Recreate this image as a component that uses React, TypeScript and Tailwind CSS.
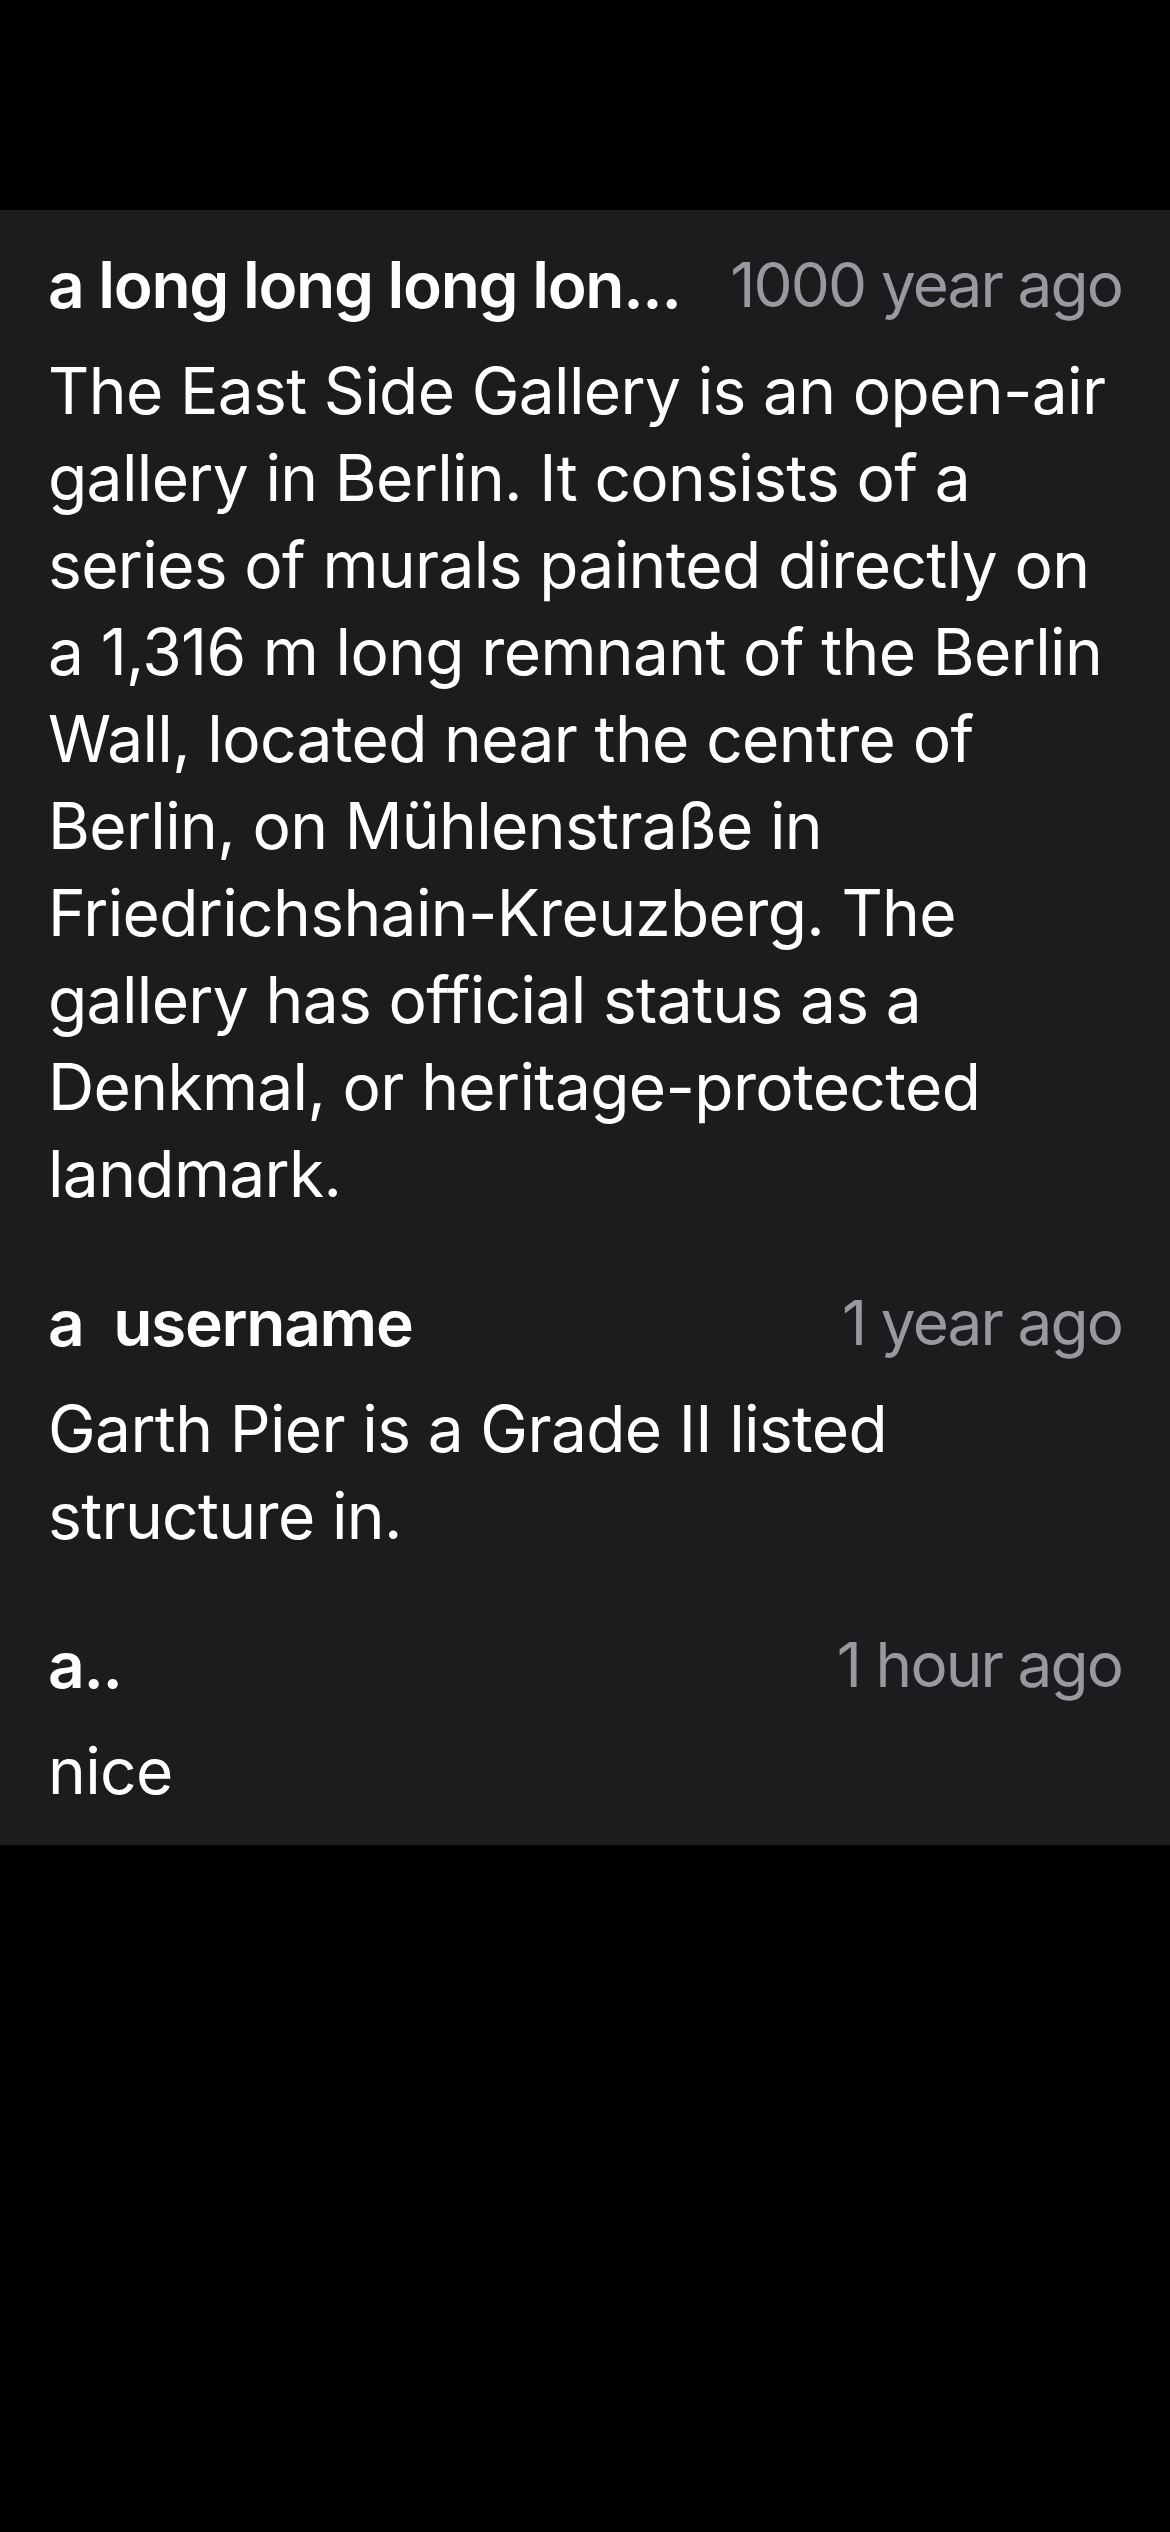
import React from 'react';

type Comment = {
  name: string;
  time: string;
  body: string;
};

const COMMENTS: Comment[] = [
  {
    name: 'a long long long lon...',
    time: '1000 year ago',
    body:
      'The East Side Gallery is an open-air gallery in Berlin. It consists of a series of murals painted directly on a 1,316 m long remnant of the Berlin Wall, located near the centre of Berlin, on Mühlenstraße in Friedrichshain-Kreuzberg. The gallery has official status as a Denkmal, or heritage-protected landmark.',
  },
  { name: 'a  username', time: '1 year ago', body: 'Garth Pier is a Grade II listed structure in.' },
  { name: 'a..', time: '1 hour ago', body: 'nice' },
];

const CommentRow: React.FC<{ comment: Comment }> = ({ comment }) => (
  <div className="px-12 py-[31px]">
    <div className="flex items-center justify-between gap-[32px] mb-[19px] leading-[87px]">
      <span className="min-w-0 truncate whitespace-pre font-semibold tracking-[-0.02em] text-white">
        {comment.name}
      </span>
      <span className="shrink-0 whitespace-nowrap text-[62px] tracking-[-0.03em] text-[#98989e]">
        {comment.time}
      </span>
    </div>
    <p className="text-white leading-[87px] tracking-[-0.01em]">{comment.body}</p>
  </div>
);

export default function App() {
  return (
    <div
      className="min-h-[2532px] w-full bg-black pt-[210px] text-[64px] antialiased"
      style={{ fontFamily: 'Inter, "Liberation Sans", sans-serif' }}
    >
      <div className="bg-[#1c1c1e]">
        {COMMENTS.map((c, i) => (
          <CommentRow key={i} comment={c} />
        ))}
      </div>
    </div>
  );
}
